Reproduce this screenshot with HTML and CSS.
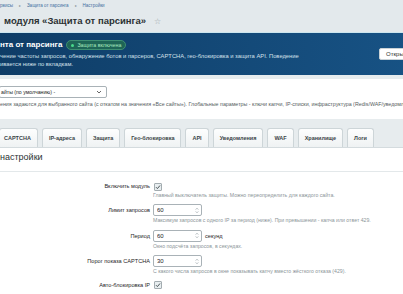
FILE: index.html
```html
<!DOCTYPE html>
<html lang="ru">
<head>
  <meta charset="UTF-8">
  <meta name="viewport" content="width=device-width, initial-scale=1.0">
  <title>Настройки модуля «Защита от парсинга»</title>
  <link rel="stylesheet" href="styles.css">
</head>
<body>
  <div class="page">
    <div class="top">
      <div class="crumbs">
        <a href="#">рвисы</a><span class="sep">▸</span><a href="#">Защита от парсинга</a><span class="sep">▸</span><a href="#">Настройки</a>
      </div>
      <div class="title_row">
        <h1>модуля «Защита от парсинга»</h1>
        <span class="star">☆</span>
      </div>
    </div>

    <div class="hero">
      <div class="hero_text">
        <div class="hero_head">
          <h2>нта от парсинга</h2>
          <span class="badge"><i class="dot"></i>Защита включена</span>
        </div>
        <p>чение частоты запросов, обнаружение ботов и парсеров, CAPTCHA, гео-блокировка и защита API. Поведение<br>ивается ниже по вкладкам.</p>
      </div>
      <button type="button" class="hero_btn">Открыть журнал</button>
    </div>

    <div class="site">
      <div class="select">
        <span>айты (по умолчанию) -</span>
        <svg width="6" height="4" viewBox="0 0 6 4"><path d="M1 1l2 2 2-2" fill="none" stroke="#555" stroke-width="0.9"/></svg>
      </div>
      <p class="site_note">ения задаются для выбранного сайта (с откатом на значения «Все сайты»). Глобальные параметры - ключи капчи, IP-списки, инфраструктура (Redis/WAF/уведомле</p>
    </div>

    <div class="tabs">
      <span class="tab first">CAPTCHA</span>
      <span class="tab">IP-адреса</span>
      <span class="tab">Защита</span>
      <span class="tab">Гео-блокировка</span>
      <span class="tab">API</span>
      <span class="tab">Уведомления</span>
      <span class="tab">WAF</span>
      <span class="tab">Хранилище</span>
      <span class="tab">Логи</span>
    </div>

    <div class="panel">
      <h3>настройки</h3>
      <div class="form">
        <div class="row">
          <label class="lbl chk_lbl">Включить модуль</label>
          <div class="ctrl">
            <span class="check"><svg width="6" height="6" viewBox="0 0 6 6"><path d="M1 3.2l1.4 1.4L5 1.5" fill="none" stroke="#4a5458" stroke-width="1"/></svg></span>
            <div class="hint">Главный выключатель защиты. Можно переопределить для каждого сайта.</div>
          </div>
        </div>
        <div class="row">
          <label class="lbl">Лимит запросов</label>
          <div class="ctrl">
            <div class="num"><input type="text" value="60"><svg width="4" height="7" viewBox="0 0 4 7"><path d="M0.7 2.6L2 1.2l1.3 1.4M0.7 4.4L2 5.8l1.3-1.4" fill="none" stroke="#9aa3a7" stroke-width="0.7"/></svg></div>
            <div class="hint">Максимум запросов с одного IP за период (ниже). При превышении - капча или ответ 429.</div>
          </div>
        </div>
        <div class="row">
          <label class="lbl">Период</label>
          <div class="ctrl">
            <div class="inline">
              <div class="num"><input type="text" value="60"><svg width="4" height="7" viewBox="0 0 4 7"><path d="M0.7 2.6L2 1.2l1.3 1.4M0.7 4.4L2 5.8l1.3-1.4" fill="none" stroke="#9aa3a7" stroke-width="0.7"/></svg></div>
              <span class="unit">секунд</span>
            </div>
            <div class="hint">Окно подсчёта запросов, в секундах.</div>
          </div>
        </div>
        <div class="row">
          <label class="lbl">Порог показа CAPTCHA</label>
          <div class="ctrl">
            <div class="num"><input type="text" value="30"><svg width="4" height="7" viewBox="0 0 4 7"><path d="M0.7 2.6L2 1.2l1.3 1.4M0.7 4.4L2 5.8l1.3-1.4" fill="none" stroke="#9aa3a7" stroke-width="0.7"/></svg></div>
            <div class="hint">С какого числа запросов в окне показывать капчу вместо жёсткого отказа (429).</div>
          </div>
        </div>
        <div class="row">
          <label class="lbl chk_lbl">Авто-блокировка IP</label>
          <div class="ctrl">
            <span class="check"><svg width="6" height="6" viewBox="0 0 6 6"><path d="M1 3.2l1.4 1.4L5 1.5" fill="none" stroke="#4a5458" stroke-width="1"/></svg></span>
          </div>
        </div>
      </div>
    </div>
  </div>
</body>
</html>
```

FILE: styles.css
```css
html, body {
  margin: 0;
  padding: 0;
  overflow: hidden;
}
body {
  width: 403px;
  height: 294px;
  font-family: "Liberation Sans", Arial, sans-serif;
  background-color: #e6ecee;
}
.page {
  width: 560px;
}

/* header */
.top {
  height: 32px;
  background-color: #e3e9ec;
}
.crumbs {
  padding-top: 2px;
  font-size: 4.5px;
  line-height: 7px;
  white-space: nowrap;
}
.crumbs a {
  color: #3f6f9f;
  text-decoration: none;
}
.crumbs .sep {
  margin: 0 6px;
  color: #8b969b;
  font-size: 4px;
}
.title_row {
  display: flex;
  align-items: center;
  margin-top: 6px;
  padding-left: 4px;
}
.title_row h1 {
  margin: 0;
  font-size: 9.5px;
  line-height: 12px;
  color: #2b3133;
}
.star {
  margin-left: 8px;
  font-size: 8px;
  color: #98a2a6;
}

/* banner */
.hero {
  display: flex;
  align-items: center;
  padding: 7px 0;
  border-top: 1px solid #cde6ee;
  background: linear-gradient(90deg, #0f3d67, #1a5a8f);
}
.hero_text {
  flex: 0 0 379px;
}
.hero_head {
  display: flex;
  align-items: center;
}
.hero_head h2 {
  margin: 0;
  font-size: 8px;
  line-height: 10px;
  color: #fff;
}
.badge {
  display: flex;
  align-items: center;
  height: 8px;
  margin-left: 4px;
  padding: 0 4px;
  border: 0.5px solid #3e8f72;
  border-radius: 5px;
  background-color: #1e6556;
  color: #a6e9be;
  font-size: 5.3px;
  white-space: nowrap;
}
.badge .dot {
  width: 3px;
  height: 3px;
  margin-right: 3px;
  border-radius: 50%;
  background-color: #49d98b;
}
.hero_text p {
  margin: 3px 0 0;
  font-size: 5.8px;
  line-height: 7.5px;
  color: #d3e0ea;
  white-space: nowrap;
}
.hero_btn {
  height: 12px;
  padding: 0 6px;
  border: 1px solid #c9d2d6;
  border-radius: 2px;
  background-color: #fff;
  color: #333;
  font-family: inherit;
  font-size: 6px;
  white-space: nowrap;
}

/* site select */
.site {
  margin-top: 4px;
  padding: 7px 0 11px;
  background-color: #fff;
}
.select {
  display: flex;
  align-items: center;
  justify-content: space-between;
  box-sizing: border-box;
  width: 108px;
  height: 12px;
  margin-left: -1px;
  padding: 0 4px 0 1px;
  border: 1px solid #a9b2b7;
  border-radius: 2px;
  font-size: 5.2px;
  color: #222;
}
.site_note {
  margin: 3px 0 0;
  font-size: 5.3px;
  line-height: 7px;
  color: #555d60;
  white-space: nowrap;
}

/* tabs */
.tabs {
  display: flex;
  gap: 4px;
  padding-top: 9px;
  border-bottom: 1px solid #d4dbde;
  background-color: #e7ecee;
}
.tab {
  height: 18px;
  padding: 0 6px;
  border: 1px solid #cdd5d8;
  border-bottom: none;
  border-radius: 3px 3px 0 0;
  background: linear-gradient(#fdfefe, #eff2f3);
  font-size: 5.5px;
  font-weight: bold;
  line-height: 18px;
  color: #3a4447;
  white-space: nowrap;
}
.tab.first {
  margin-left: -1px;
  padding-left: 4px;
}

/* content */
.panel {
  height: 200px;
  background-color: #fff;
}
.panel h3 {
  margin: 0;
  padding: 4px 0 9px;
  border-bottom: 1px solid #e3e8ea;
  font-size: 9px;
  font-weight: normal;
  line-height: 10px;
  color: #2b3234;
}
.form {
  padding-top: 10px;
}
.row {
  display: grid;
  grid-template-columns: 150px 1fr;
  column-gap: 3px;
  padding-bottom: 6px;
}
.lbl {
  text-align: right;
  font-size: 5.6px;
  line-height: 12px;
  color: #1f2527;
  white-space: nowrap;
}
.lbl.chk_lbl {
  line-height: 9px;
}
.check {
  display: flex;
  align-items: center;
  justify-content: center;
  box-sizing: border-box;
  width: 8px;
  height: 8px;
  margin: 0.5px 0 0.5px 1px;
  border: 1px solid #a3acb0;
  border-radius: 1px;
  background-color: #e8eef0;
}
.num {
  display: flex;
  align-items: center;
  box-sizing: border-box;
  width: 49px;
  height: 12px;
  padding-right: 2px;
  border: 1px solid #a9b2b7;
  border-radius: 2px;
  background-color: #fff;
}
.num input {
  width: 38px;
  padding: 0 0 0 3px;
  border: none;
  outline: none;
  font-family: inherit;
  font-size: 6px;
  color: #222;
}
.num svg {
  margin-left: auto;
}
.inline {
  display: flex;
  align-items: center;
}
.unit {
  margin-left: 3px;
  font-size: 5.6px;
  color: #1f2527;
}
.hint {
  margin-top: 1px;
  font-size: 5.2px;
  line-height: 6.5px;
  color: #8c9599;
  white-space: nowrap;
}
```
